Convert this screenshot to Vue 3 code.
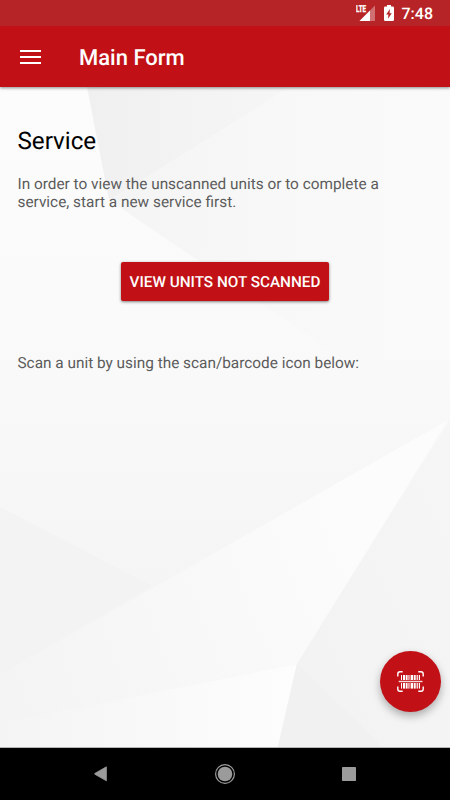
<template>
  <div class="screen">
    <div class="status-bar">
      <svg class="signal" width="20" height="18" viewBox="0 0 20 18">
        <path d="M19 1.5V17H3.5z" fill="#fff" fill-opacity=".35" />
        <path d="M14 6.5V17H3.5z" fill="#fff" />
        <path d="M0 0h11v7.6L9.6 9H0z" fill="#b72427" />
        <text x="0" y="8" textLength="10" lengthAdjust="spacingAndGlyphs">LTE</text>
      </svg>
      <svg class="battery" width="10" height="16" viewBox="0 0 10 16">
        <path
          d="M3 0h4v1.6h1.7q1.3 0 1.3 1.3v11.8q0 1.3-1.3 1.3H1.3Q0 16 0 14.7V2.9q0-1.3 1.3-1.3H3z"
          fill="#fff"
        />
        <path d="M5.9 4 2.2 9.4h2.2L4 13.8l3.8-5.5H5.6z" fill="#b72427" />
      </svg>
      <span class="clock">{{ clock }}</span>
    </div>

    <header class="toolbar">
      <button class="menu" aria-label="Menu">
        <span></span>
        <span></span>
        <span></span>
      </button>
      <h1>Main Form</h1>
    </header>

    <main class="content">
      <!-- Low-poly backdrop -->
      <svg class="backdrop" viewBox="0 87 450 660" preserveAspectRatio="none">
        <defs>
          <linearGradient id="base" x1="0" y1="0" x2="0" y2="1">
            <stop offset="0" stop-color="#fcfcfc" />
            <stop offset=".45" stop-color="#f9f9f9" />
            <stop offset=".75" stop-color="#f5f5f5" />
            <stop offset="1" stop-color="#f3f3f3" />
          </linearGradient>
          <linearGradient id="top" x1="0" y1="0" x2="1" y2="0">
            <stop offset="0" stop-color="#f0f0f0" />
            <stop offset="1" stop-color="#f6f6f6" />
          </linearGradient>
          <linearGradient id="fold" x1="0" y1="0" x2="1" y2="0">
            <stop offset="0" stop-color="#f4f4f4" />
            <stop offset=".5" stop-color="#f8f8f8" />
            <stop offset="1" stop-color="#fafafa" />
          </linearGradient>
          <linearGradient id="beam" gradientUnits="userSpaceOnUse" x1="0" y1="660" x2="360" y2="520">
            <stop offset="0" stop-color="#f4f4f4" />
            <stop offset="1" stop-color="#fcfcfc" />
          </linearGradient>
          <linearGradient id="corner" x1="0" y1="0" x2="1" y2="0">
            <stop offset="0" stop-color="#f4f4f4" />
            <stop offset="1" stop-color="#fdfdfd" />
          </linearGradient>
          <linearGradient id="side" x1="0" y1="1" x2="1" y2="0">
            <stop offset="0" stop-color="#f2f2f2" />
            <stop offset="1" stop-color="#f6f6f6" />
          </linearGradient>
        </defs>
        <rect y="87" width="450" height="660" fill="url(#base)" />
        <path d="M87 87H290L133 186 109 200z" fill="url(#top)" />
        <path d="M290 87H450V360H345L109 200 133 186z" fill="url(#fold)" />
        <path d="M0 507 152 586 0 674z" fill="#f2f2f2" fill-opacity=".7" />
        <path d="M0 675 448 420 297 664 0 723z" fill="url(#beam)" />
        <path d="M0 723 297 664 278 747H0z" fill="url(#corner)" />
        <path d="M450 420 297 664 278 747H450z" fill="url(#side)" />
        <path d="M297 664 382 747H278z" fill="#f1f1f1" />
      </svg>

      <h2>Service</h2>
      <p class="intro">
        In order to view the unscanned units or to complete a<br />
        service, start a new service first.
      </p>
      <button class="view-btn">VIEW UNITS NOT SCANNED</button>
      <p class="hint">Scan a unit by using the scan/barcode icon below:</p>

      <button class="fab" aria-label="Scan barcode">
        <svg width="27" height="21" viewBox="0 0 27 21">
          <path
            d="M.8 5.5V3Q.8.8 3 .8h2.7M21.3.8H24q2.2 0 2.2 2.2v2.5M.8 15.5V18q0 2.2 2.2 2.2h2.7M21.3 20.2H24q2.2 0 2.2-2.2v-2.5"
            fill="none"
            stroke="#fff"
            stroke-width="1.4"
          />
          <g fill="#fff">
            <template v-for="bar in bars" :key="bar.x">
              <rect :x="bar.x" y="4" :width="bar.w" height="5" />
              <rect :x="bar.x" y="12" :width="bar.w" height="5.6" />
            </template>
          </g>
          <rect x="1.7" y="9.8" width="23.8" height="1.4" fill="#fff" fill-opacity=".85" />
        </svg>
      </button>
    </main>

    <nav class="nav-bar">
      <svg width="14" height="16" viewBox="0 0 14 16">
        <path d="M12.4.8v14L.8 8.2q-.6-.4 0-.8z" fill="#9b9b9b" stroke="#9b9b9b" stroke-width=".8" />
      </svg>
      <svg width="20" height="20" viewBox="0 0 20 20">
        <circle cx="10" cy="10" r="9.4" fill="none" stroke="#9b9b9b" stroke-width="1.2" />
        <circle cx="10" cy="10" r="7.3" fill="#9b9b9b" />
      </svg>
      <svg width="14" height="14" viewBox="0 0 14 14">
        <rect width="14" height="14" rx=".7" fill="#9b9b9b" />
      </svg>
    </nav>
  </div>
</template>

<script setup>
import { ref } from 'vue';

const clock = ref('7:48');

// Barcode stripes inside the scan icon
const bars = [
  { x: 4, w: 1 },
  { x: 6, w: 2.3 },
  { x: 9, w: 1.6 },
  { x: 11.4, w: 1.1 },
  { x: 13.6, w: 2.6 },
  { x: 16.9, w: 1.8 },
  { x: 19.6, w: 1.2 },
  { x: 21.8, w: 1.2 }
];
</script>

<style>
body {
  margin: 0;
  background: #000;
}
</style>

<style scoped>
.screen {
  display: flex;
  flex-direction: column;
  width: 450px;
  height: 800px;
  overflow: hidden;
  font-family: Roboto, "Liberation Sans", sans-serif;
  text-rendering: geometricPrecision;
}
button {
  border: none;
  padding: 0;
  font-family: inherit;
  text-rendering: inherit;
  cursor: pointer;
}
h1, h2, p { margin: 0; }

.status-bar {
  display: flex;
  align-items: flex-start;
  justify-content: flex-end;
  height: 26px;
  padding-right: 17px;
  box-sizing: border-box;
  background: #b72427;
  color: #fff;
}
.signal { margin: 4px 8px 0 0; }
.signal text {
  font-size: 9.5px;
  font-weight: 700;
  fill: #fff;
  stroke: #fff;
  stroke-width: .35px;
}
.battery { margin: 5px 8px 0 0; }
.clock { margin-top: 4px; font-size: 16px; line-height: 20px; font-weight: 500; }

.toolbar {
  display: flex;
  align-items: center;
  height: 61px;
  padding-left: 20px;
  background: #c11116;
  color: #fff;
  z-index: 1;
  box-shadow: 0 1px 3px rgba(0, 0, 0, .45);
  clip-path: inset(0 0 -6px 0);
}
.menu {
  display: flex;
  flex-direction: column;
  gap: 4px;
  width: 21px;
  margin-right: 38px;
  background: none;
}
.menu span { height: 2px; background: #fff; }
h1 { font-size: 22px; line-height: 26px; font-weight: 500; margin-top: 4px; }

.content {
  position: relative;
  display: flex;
  flex-direction: column;
  height: 661px;
  padding: 40px 17.5px 0;
  box-sizing: border-box;
  border-bottom: 1px solid #b5b5b5;
}
.backdrop {
  position: absolute;
  inset: 0;
  width: 100%;
  height: 100%;
  z-index: -1;
}
h2 { font-size: 24.2px; line-height: 28px; font-weight: 400; color: #000; }
.intro, .hint {
  font-size: 15.36px;
  line-height: 18px;
  color: #5c5c5c;
  white-space: nowrap;
}
.intro { margin-top: 20px; }
.view-btn {
  align-self: center;
  width: 208px;
  height: 39px;
  margin-top: 51px;
  padding-top: 1px;
  border-radius: 2px;
  background: #c11116;
  color: #fff;
  font-size: 15.3px;
  font-weight: 500;
  white-space: nowrap;
  box-shadow: 0 1px 3px rgba(0, 0, 0, .5);
}
.hint { margin-top: 53px; }
.fab {
  position: absolute;
  right: 9px;
  bottom: 35px;
  display: flex;
  align-items: center;
  justify-content: center;
  width: 61px;
  height: 61px;
  border-radius: 50%;
  background: #c11116;
  box-shadow: 0 4px 8px rgba(0, 0, 0, .3);
}

.nav-bar {
  display: flex;
  align-items: center;
  justify-content: space-between;
  flex: 1;
  padding: 0 94px 0 94px;
  background: #000;
}
</style>
